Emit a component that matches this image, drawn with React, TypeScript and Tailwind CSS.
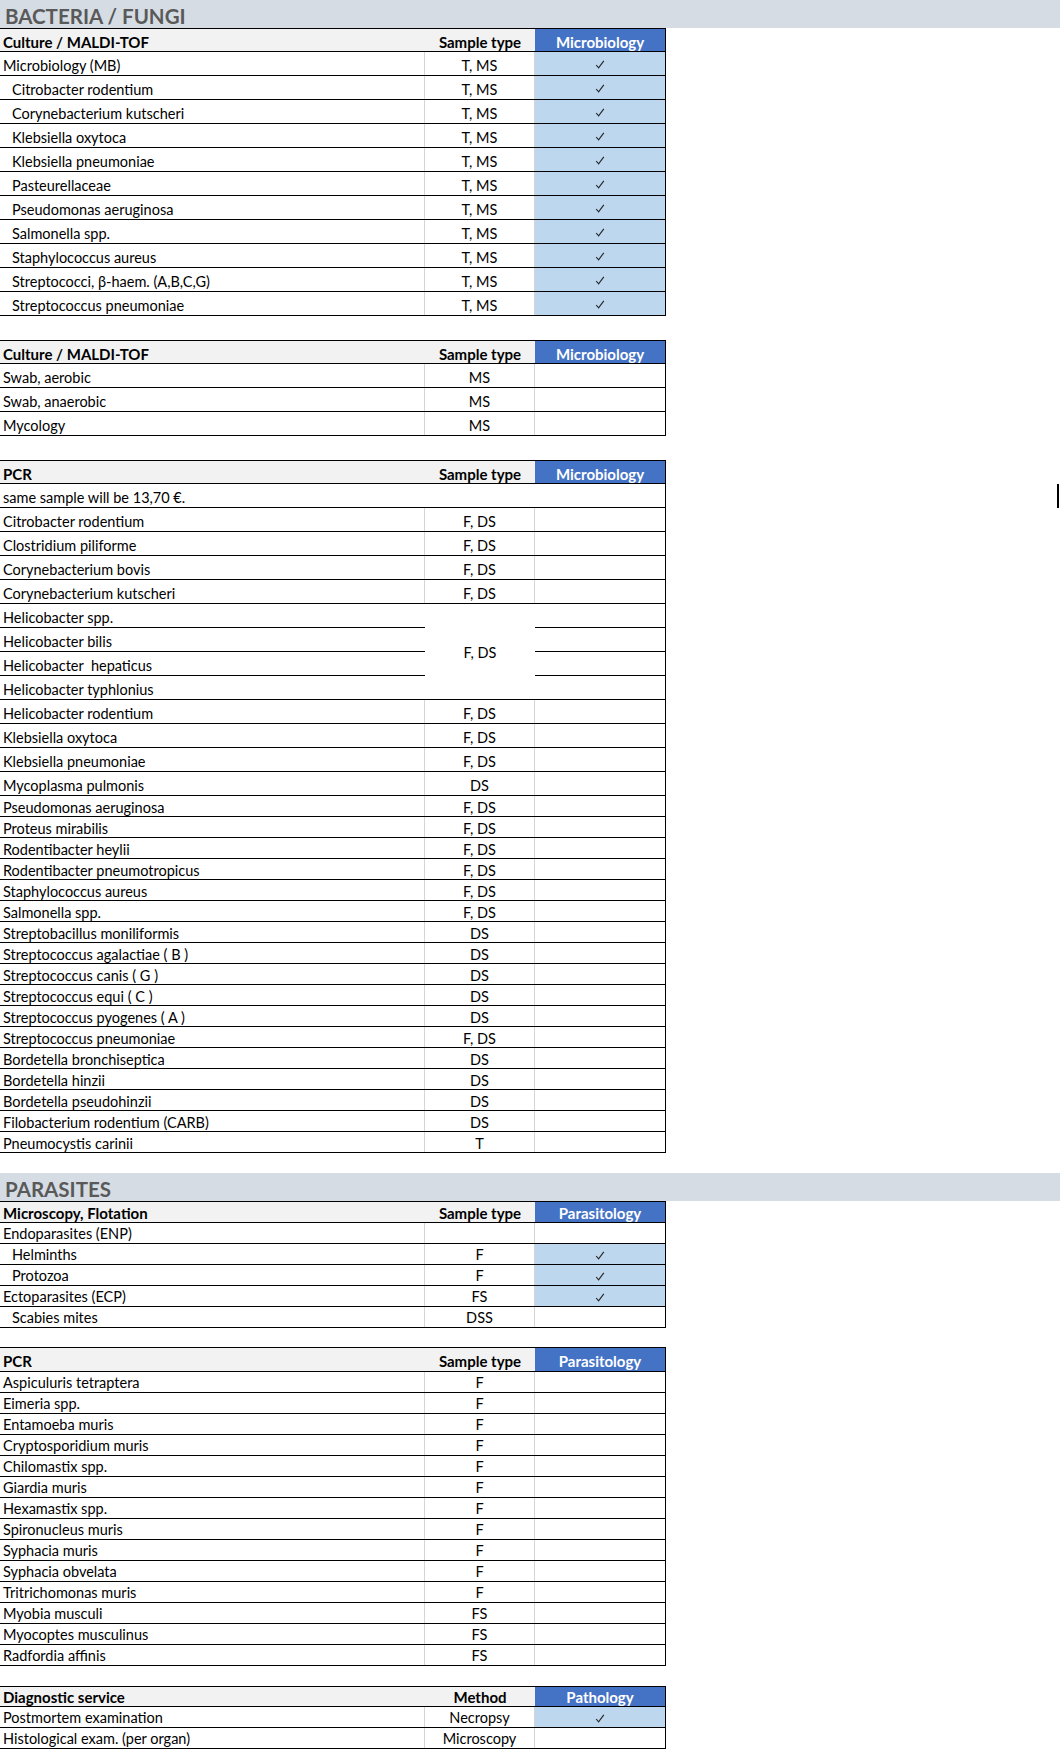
import React from "react";

type R = { n: string; s: string; c?: boolean; i?: boolean };

const Check = () => (
  <svg width="10" height="9" viewBox="0 0 10 9" className="block">
    <path d="M1.2 5 L3.6 7.8 L8.8 0.8" fill="none" stroke="#262626" strokeWidth="1.15" />
  </svg>
);

const Band = ({ t }: { t: string }) => (
  <div className="flex h-[28px] w-[1060px] items-center bg-[#d6dce4] pl-[5px] pt-[4px]">
    <span className="text-[20.5px] font-bold leading-none text-[#595959]">{t}</span>
  </div>
);

const Header = ({ a, b, c, h, p }: { a: string; b: string; c: string; h: string; p: string }) => (
  <div className={`flex border-y border-black text-[15px] font-bold ${h}`}>
    <div className={`flex w-[425px] items-center bg-[#f2f2f2] pl-[3px] ${p}`}>{a}</div>
    <div className={`flex w-[110px] items-center justify-center bg-[#f2f2f2] ${p}`}>{b}</div>
    <div className={`flex w-[130px] items-center justify-center bg-[#4472c4] text-white ${p}`}>{c}</div>
  </div>
);

const Row = ({ r, h, p }: { r: R; h: string; p: string }) => (
  <div className={`flex border-b border-black ${h}`}>
    <div className={`flex w-[425px] items-center border-r border-[#d4d4d4] ${p} ${r.i ? "pl-[12px]" : "pl-[3px]"}`}>
      <span className="whitespace-pre">{r.n}</span>
    </div>
    <div className={`flex w-[110px] items-center justify-center border-r border-[#d4d4d4] ${p}`}>{r.s}</div>
    <div className={`flex w-[130px] items-center justify-center pt-[2px] ${r.c ? "bg-[#bdd7ee]" : ""}`}>
      {r.c ? <Check /> : null}
    </div>
  </div>
);

const t1: R[] = [
  { n: "Microbiology (MB)", s: "T, MS", c: true },
  { n: "Citrobacter rodentium", s: "T, MS", c: true, i: true },
  { n: "Corynebacterium kutscheri", s: "T, MS", c: true, i: true },
  { n: "Klebsiella oxytoca", s: "T, MS", c: true, i: true },
  { n: "Klebsiella pneumoniae", s: "T, MS", c: true, i: true },
  { n: "Pasteurellaceae", s: "T, MS", c: true, i: true },
  { n: "Pseudomonas aeruginosa", s: "T, MS", c: true, i: true },
  { n: "Salmonella spp.", s: "T, MS", c: true, i: true },
  { n: "Staphylococcus aureus", s: "T, MS", c: true, i: true },
  { n: "Streptococci, β-haem. (A,B,C,G)", s: "T, MS", c: true, i: true },
  { n: "Streptococcus pneumoniae", s: "T, MS", c: true, i: true },
];

const t2: R[] = [
  { n: "Swab, aerobic", s: "MS" },
  { n: "Swab, anaerobic", s: "MS" },
  { n: "Mycology", s: "MS" },
];

const t3a: R[] = [
  { n: "Citrobacter rodentium", s: "F, DS" },
  { n: "Clostridium piliforme", s: "F, DS" },
  { n: "Corynebacterium bovis", s: "F, DS" },
  { n: "Corynebacterium kutscheri", s: "F, DS" },
];

const heli = ["Helicobacter spp.", "Helicobacter bilis", "Helicobacter  hepaticus", "Helicobacter typhlonius"];

const t3b: R[] = [
  { n: "Helicobacter rodentium", s: "F, DS" },
  { n: "Klebsiella oxytoca", s: "F, DS" },
  { n: "Klebsiella pneumoniae", s: "F, DS" },
  { n: "Mycoplasma pulmonis", s: "DS" },
];

const t3c: R[] = [
  { n: "Pseudomonas aeruginosa", s: "F, DS" },
  { n: "Proteus mirabilis", s: "F, DS" },
  { n: "Rodentibacter heylii", s: "F, DS" },
  { n: "Rodentibacter pneumotropicus", s: "F, DS" },
  { n: "Staphylococcus aureus", s: "F, DS" },
  { n: "Salmonella spp.", s: "F, DS" },
  { n: "Streptobacillus moniliformis", s: "DS" },
  { n: "Streptococcus agalactiae ( B )", s: "DS" },
  { n: "Streptococcus canis ( G )", s: "DS" },
  { n: "Streptococcus equi ( C )", s: "DS" },
  { n: "Streptococcus pyogenes ( A )", s: "DS" },
  { n: "Streptococcus pneumoniae", s: "F, DS" },
  { n: "Bordetella bronchiseptica", s: "DS" },
  { n: "Bordetella hinzii", s: "DS" },
  { n: "Bordetella pseudohinzii", s: "DS" },
  { n: "Filobacterium rodentium (CARB)", s: "DS" },
  { n: "Pneumocystis carinii", s: "T" },
];

const t4: R[] = [
  { n: "Endoparasites (ENP)", s: "" },
  { n: "Helminths", s: "F", c: true, i: true },
  { n: "Protozoa", s: "F", c: true, i: true },
  { n: "Ectoparasites (ECP)", s: "FS", c: true },
  { n: "Scabies mites", s: "DSS", i: true },
];

const t5: R[] = [
  { n: "Aspiculuris tetraptera", s: "F" },
  { n: "Eimeria spp.", s: "F" },
  { n: "Entamoeba muris", s: "F" },
  { n: "Cryptosporidium muris", s: "F" },
  { n: "Chilomastix spp.", s: "F" },
  { n: "Giardia muris", s: "F" },
  { n: "Hexamastix spp.", s: "F" },
  { n: "Spironucleus muris", s: "F" },
  { n: "Syphacia muris", s: "F" },
  { n: "Syphacia obvelata", s: "F" },
  { n: "Tritrichomonas muris", s: "F" },
  { n: "Myobia musculi", s: "FS" },
  { n: "Myocoptes musculinus", s: "FS" },
  { n: "Radfordia affinis", s: "FS" },
];

const t6: R[] = [
  { n: "Postmortem examination", s: "Necropsy", c: true },
  { n: "Histological exam. (per organ)", s: "Microscopy" },
];

export default function App() {
  return (
    <div className="relative h-[1749px] w-[1060px] overflow-hidden bg-white font-['Lato','Liberation_Sans',sans-serif] text-[14.5px] leading-none text-black">
      <Band t="BACTERIA / FUNGI" />

      <div className="w-[666px] border-r border-black">
        <Header a="Culture / MALDI-TOF" b="Sample type" c="Microbiology" h="h-[24px]" p="pt-[4px]" />
        {t1.map((r, k) => (
          <Row key={k} r={r} h="h-[24px]" p="pt-[5px]" />
        ))}
      </div>

      <div className="h-[24px]" />

      <div className="w-[666px] border-r border-black">
        <Header a="Culture / MALDI-TOF" b="Sample type" c="Microbiology" h="h-[24px]" p="pt-[4px]" />
        {t2.map((r, k) => (
          <Row key={k} r={r} h="h-[24px]" p="pt-[5px]" />
        ))}
      </div>

      <div className="h-[24px]" />

      <div className="w-[666px] border-r border-black">
        <Header a="PCR" b="Sample type" c="Microbiology" h="h-[24px]" p="pt-[4px]" />
        <div className="flex h-[24px] items-center border-b border-black pl-[3px] pt-[5px]">same sample will be 13,70 €.</div>
        {t3a.map((r, k) => (
          <Row key={k} r={r} h="h-[24px]" p="pt-[5px]" />
        ))}
        <div className="flex">
          <div className="flex w-[425px] flex-col">
            {heli.map((n, k) => (
              <div key={k} className="flex h-[24px] items-center border-b border-black pl-[3px] pt-[5px]">
                <span className="whitespace-pre">{n}</span>
              </div>
            ))}
          </div>
          <div className="flex w-[110px] items-center justify-center border-b border-black pt-[4px]">F, DS</div>
          <div className="flex w-[130px] flex-col">
            {heli.map((n, k) => (
              <div key={k} className="h-[24px] border-b border-black" />
            ))}
          </div>
        </div>
        {t3b.map((r, k) => (
          <Row key={k} r={r} h="h-[24px]" p="pt-[5px]" />
        ))}
        {t3c.map((r, k) => (
          <Row key={k} r={r} h="h-[21px]" p="pt-[4px]" />
        ))}
      </div>

      <div className="h-[20px]" />
      <Band t="PARASITES" />

      <div className="w-[666px] border-r border-black">
        <Header a="Microscopy, Flotation" b="Sample type" c="Parasitology" h="h-[22px]" p="pt-[2px]" />
        {t4.map((r, k) => (
          <Row key={k} r={r} h="h-[21px]" p="pt-[3px]" />
        ))}
      </div>

      <div className="h-[19px]" />

      <div className="w-[666px] border-r border-black">
        <Header a="PCR" b="Sample type" c="Parasitology" h="h-[25px]" p="pt-[4px]" />
        {t5.map((r, k) => (
          <Row key={k} r={r} h="h-[21px]" p="pt-[3px]" />
        ))}
      </div>

      <div className="h-[20px]" />

      <div className="w-[666px] border-r border-black">
        <Header a="Diagnostic service" b="Method" c="Pathology" h="h-[21px]" p="pt-[1px]" />
        {t6.map((r, k) => (
          <Row key={k} r={r} h="h-[21px]" p="pt-[3px]" />
        ))}
      </div>

      <div className="absolute left-[1057px] top-[484px] h-[24px] w-[2px] bg-black" />
    </div>
  );
}
